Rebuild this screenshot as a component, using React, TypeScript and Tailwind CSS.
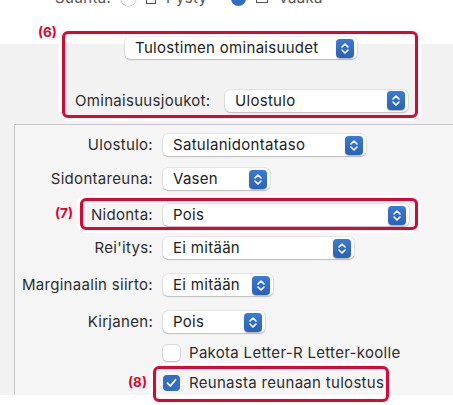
import React from "react";

const Stepper: React.FC = () => (
  <span className="flex h-[19px] w-[18px] shrink-0 items-center justify-center rounded-[4px] bg-gradient-to-b from-[#3b7bd4] to-[#2a62b4] shadow-[0_0.5px_1px_rgba(0,0,0,0.3)]">
    <svg width="10" height="13" viewBox="0 0 10 13" fill="none">
      <path d="M2 5L5 2L8 5" stroke="white" strokeWidth="1.6" strokeLinecap="round" strokeLinejoin="round" />
      <path d="M2 8L5 11L8 8" stroke="white" strokeWidth="1.6" strokeLinecap="round" strokeLinejoin="round" />
    </svg>
  </span>
);

const Popup: React.FC<{ text: string; width: string }> = ({ text, width }) => (
  <div
    className={`flex h-[22px] ${width} items-center justify-between rounded-[5px] bg-white pl-[10px] pr-[3px] text-[#222] shadow-[0_0_0_0.5px_rgba(0,0,0,0.12),0_1px_1.5px_rgba(0,0,0,0.18)]`}
  >
    <span className="whitespace-nowrap">{text}</span>
    <Stepper />
  </div>
);

const Checkbox: React.FC<{ checked?: boolean }> = ({ checked }) =>
  checked ? (
    <span className="flex h-[16px] w-[17px] shrink-0 items-center justify-center rounded-[4px] bg-[#2f6dc6]">
      <svg width="11" height="10" viewBox="0 0 11 10" fill="none">
        <path d="M1.5 5.2L4.2 8L9.5 1.8" stroke="white" strokeWidth="1.8" strokeLinecap="round" strokeLinejoin="round" />
      </svg>
    </span>
  ) : (
    <span className="h-[16px] w-[17px] shrink-0 rounded-[4px] bg-white shadow-[0_0_0_0.5px_rgba(0,0,0,0.25),0_1px_1px_rgba(0,0,0,0.12)]" />
  );

const Marker: React.FC<{ label: string; className: string; labelClass: string }> = ({
  label,
  className,
  labelClass,
}) => (
  <>
    <div
      className={`absolute rounded-[6px] border-[3px] border-[#de0530] shadow-[0_0_0_3px_white] ${className}`}
    />
    <div className={`absolute text-[13.5px] font-bold tracking-normal text-[#de0530] ${labelClass}`}>{label}</div>
  </>
);

const rows = [
  { label: "Ulostulo:", value: "Satulanidontataso", width: "w-[203px]", mt: "mt-0" },
  { label: "Sidontareuna:", value: "Vasen", width: "w-[107px]", mt: "mt-[12px]" },
  { label: "Nidonta:", value: "Pois", width: "w-[246px]", mt: "mt-[14px]" },
  { label: "Rei'itys:", value: "Ei mitään", width: "w-[191px]", mt: "mt-[11px]" },
  { label: "Marginaalin siirto:", value: "Ei mitään", width: "w-[110px]", mt: "mt-[15px]" },
  { label: "Kirjanen:", value: "Pois", width: "w-[102px]", mt: "mt-[15px]" },
];

const App: React.FC = () => {
  return (
    <div className="relative flex h-[405px] w-[453px] flex-col overflow-hidden bg-white font-['Inter',sans-serif] text-[15px] leading-[22px] tracking-[0.3px] text-[#2d2d2d]">
      <div className="flex h-[44px] shrink-0 flex-col">
        <div className="-mt-[13px] flex h-[22px] items-center gap-[10px] pl-[55px] text-[#555]">
          <span>Suunta:</span>
          <span className="h-[15px] w-[15px] rounded-full bg-white shadow-[0_0_0_0.5px_rgba(0,0,0,0.3)]" />
          <span className="h-[12px] w-[10px] border border-[#555]" />
          <span>Pysty</span>
          <span className="ml-[14px] h-[15px] w-[15px] rounded-full bg-[#2f6dc6]" />
          <span className="h-[10px] w-[12px] border border-[#555]" />
          <span>Vaaka</span>
        </div>
      </div>

      <div className="flex h-[351px] shrink-0 flex-col bg-[#f2f2f2]">
        <div className="-mt-[7px] flex justify-center pl-[29px]">
          <Popup text="Tulostimen ominaisuudet" width="w-[232px]" />
        </div>

        <div className="mt-[30px] flex h-[23px] items-center pl-[75px]">
          <span className="w-[150px] whitespace-nowrap">Ominaisuusjoukot:</span>
          <Popup text="Ulostulo" width="w-[183px]" />
        </div>

        <div className="ml-[14px] mt-[12px] flex h-[271px] flex-col border-l border-t border-[#c6c6c6] bg-[#f5f5f5] pt-[9px]">
          {rows.map((r) => (
            <div key={r.label} className={`flex h-[22px] items-center ${r.mt}`}>
              <span className="w-[138px] whitespace-nowrap text-right">{r.label}</span>
              <span className="ml-[10px]">
                <Popup text={r.value} width={r.width} />
              </span>
            </div>
          ))}
          <div className="ml-[148px] mt-[12px] flex h-[16px] items-center gap-[9px]">
            <Checkbox />
            <span className="whitespace-nowrap">Pakota Letter-R Letter-koolle</span>
          </div>
          <div className="ml-[148px] mt-[14px] flex h-[16px] items-center gap-[9px]">
            <Checkbox checked />
            <span className="whitespace-nowrap">Reunasta reunaan tulostus</span>
          </div>
        </div>
      </div>

      <Marker label="(6)" className="left-[62px] top-[31px] h-[87px] w-[356px]" labelClass="left-[38px] top-[21px]" />
      <Marker label="(7)" className="left-[80px] top-[198px] h-[32px] w-[338px]" labelClass="left-[55px] top-[202px]" />
      <Marker label="(8)" className="left-[153px] top-[366px] h-[36px] w-[236px]" labelClass="left-[128px] top-[371px]" />
    </div>
  );
};

export default App;
